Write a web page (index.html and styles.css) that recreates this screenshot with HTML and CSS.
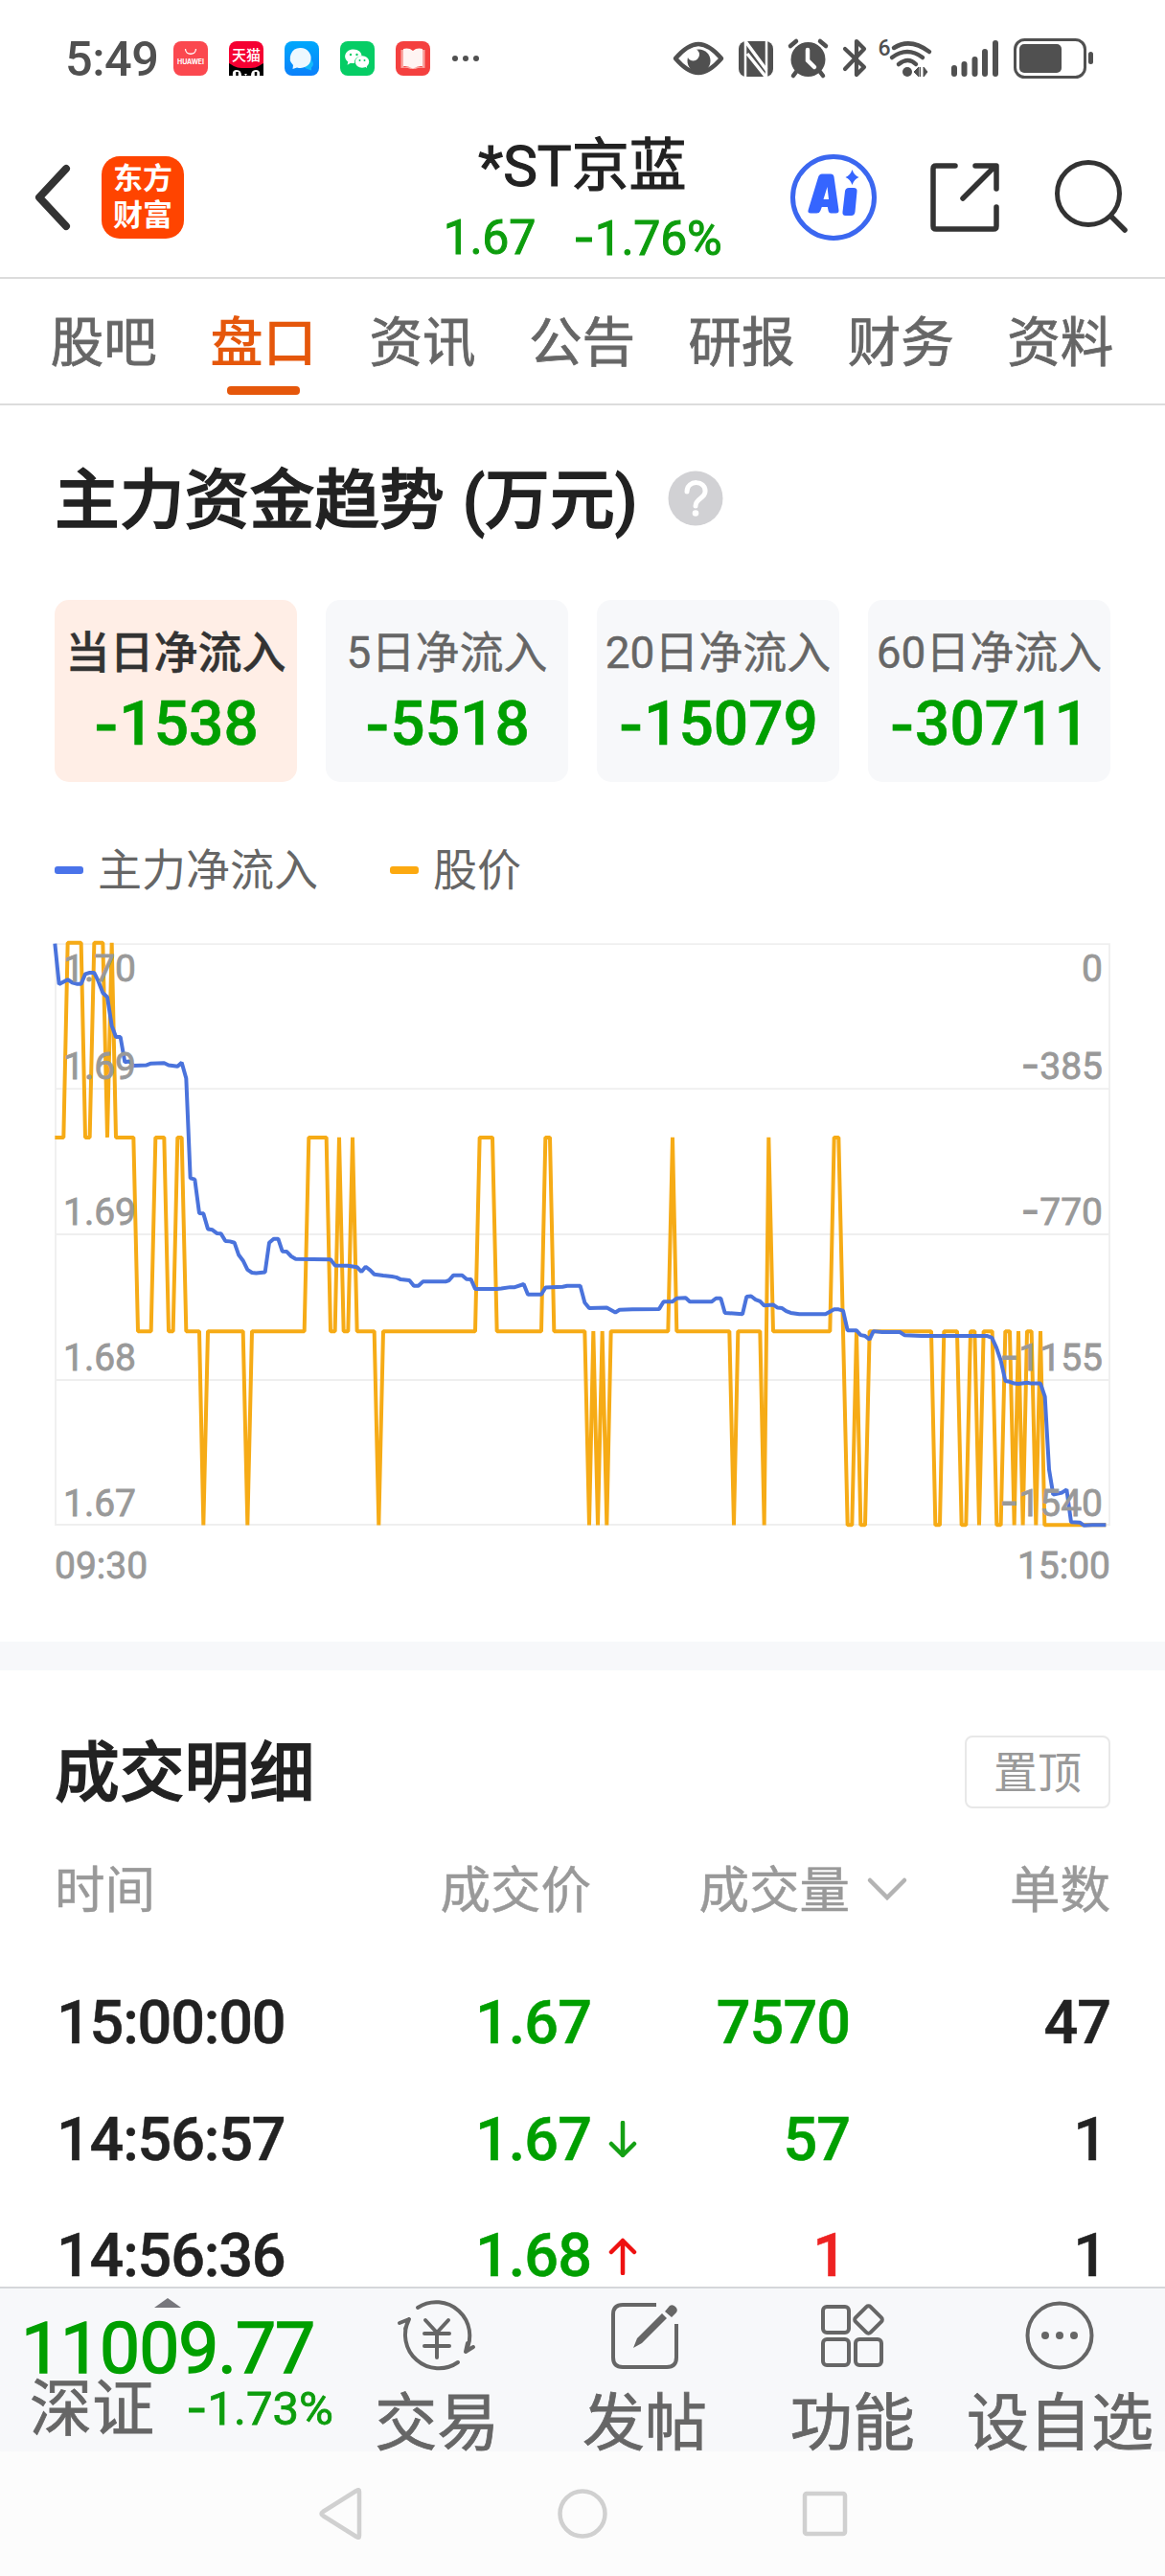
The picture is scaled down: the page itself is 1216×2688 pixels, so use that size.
FILE: index.html
```html
<!DOCTYPE html>
<html lang="zh-CN">
<head>
<meta charset="utf-8">
<title>*ST京蓝</title>
<link rel="stylesheet" href="styles.css">
</head>
<body>
<div class="status">
  <span class="clock">5:49</span>
  <div class="apps">
    <svg viewBox="0 0 36 36"><rect width="36" height="36" rx="8" fill="#fb484f"/><path d="M12.500 8c0 7 11 7 11 0" fill="none" stroke="#fff" stroke-width="1.300"/><text x="18" y="23.500" text-anchor="middle" class="t-huawei" textLength="28">HUAWEI</text></svg>
    <svg viewBox="0 0 36 36"><rect width="36" height="36" rx="8" fill="#f50032"/><path d="M0 23q2 1 5 3 4 2 8 2h10q5 0 8-2 3-2 5-3v13H0z" fill="#000"/><path d="M4 36q-1-6 4-6t5 6zM23 36q0-6 5-6t4 6zM16 34l3 0-1.500 2z" fill="#fff"/><path d="M8.500 36v-4M28 36v-4" stroke="#000" stroke-width="2.500"/><text x="18" y="19.500" text-anchor="middle" class="t-tmall">天猫</text></svg>
    <svg viewBox="0 0 36 36"><defs><linearGradient id="msg" x2="0" y2="1"><stop stop-color="#00a8fc"/><stop offset="1" stop-color="#0a80fa"/></linearGradient></defs><rect width="36" height="36" rx="8" fill="url(#msg)"/><path d="M20 25a5 5 0 1 1 8 2.500v3l-4-1.500a5 5 0 0 1-4-4z" fill="#14b9fb"/><path d="M17 7a11 10.500 0 1 1-4 20.400L8.500 29l.5-4A10.500 10.500 0 0 1 17 7z" fill="#edf8ff"/></svg>
    <svg viewBox="0 0 36 36"><rect width="36" height="36" rx="8" fill="#06cd65"/><path d="M14 8.500c5 0 8.500 3 8.500 7-4.500 0-8 3-7.500 7.500-1.500.2-3 0-4-.3l-3.500 2 .8-3.200C2 16.500 6 8.500 14 8.500z" fill="#fff"/><ellipse cx="23" cy="21.500" rx="7.200" ry="6.200" fill="#fff"/><path d="M25 26l3 2-.5-4z" fill="#fff"/><g fill="#06cd65"><circle cx="11" cy="14" r="1.200"/><circle cx="17.500" cy="14" r="1.200"/><circle cx="20.500" cy="20" r="1"/><circle cx="25.500" cy="20" r="1"/></g></svg>
    <svg viewBox="0 0 36 36"><rect width="36" height="36" rx="8" fill="#f4403f"/><path d="M5.500 9h3v18h19V9h3v19q-6-1-10 1h-5q-4-2-10-1z" fill="#f9a6a2"/><path d="M8 8q6-1.500 10 2 4-3.500 10-2v18q-5-.5-10 2.500-5-3-10-2.500z" fill="#fff4f3"/></svg>
  </div>
  <svg class="more" viewBox="0 0 30 8"><g fill="#505050"><circle cx="4" cy="4" r="3"/><circle cx="15" cy="4" r="3"/><circle cx="26" cy="4" r="3"/></g></svg>
  <svg class="sys" viewBox="700 36 446 50">
    <path d="M706 61Q719 46 730 46T754 61Q741 76 730 76T706 61z" fill="none" stroke="#505050" stroke-width="4.500" stroke-linejoin="round"/>
    <circle cx="730.500" cy="63.500" r="12" fill="#505050"/><circle cx="724.500" cy="57" r="6.500" fill="#fff"/>
    <rect x="772" y="43" width="36" height="37" rx="8" fill="#505050"/><path d="M779 42v39M801 81V42" stroke="#fff" stroke-width="2.500"/><path d="M779 43l22 30M781 56l20 25" stroke="#fff" stroke-width="3.500"/>
    <path d="M826 48l6-5M863 48l-6-5M832 75l-3 4M857 75l3 4" stroke="#505050" stroke-width="4.500" stroke-linecap="round"/><circle cx="844.500" cy="62" r="18" fill="#505050"/><path d="M844 52v11l7 7" fill="none" stroke="#fff" stroke-width="4.500" stroke-linecap="round"/>
    <path d="M883 51l20 19-8 8V43l8 8-20 21" fill="none" stroke="#505050" stroke-width="4.200" stroke-linejoin="round" stroke-linecap="round"/>
    <text x="917.500" y="58" class="t-six">6</text>
    <path d="M934 50q17-11 37 4M932 60q16-12 32 0M939 67q10-8 18 0" fill="none" stroke="#505050" stroke-width="4.500" stroke-linecap="round"/><circle cx="948" cy="75" r="5" fill="#505050"/><path d="M955 75l5-5v10zM969 75l-4-5v10zM961.500 70v10" fill="#505050" stroke="#505050"/>
    <path d="M997 71v6M1007.500 67v10M1018.500 62v15M1029 54v23M1040 45v32" stroke="#505050" stroke-width="6" stroke-linecap="round"/>
    <rect x="1060.500" y="41.500" width="73" height="39" rx="10" fill="none" stroke="#505050" stroke-width="3"/><rect x="1065" y="46" width="44" height="30" rx="5" fill="#505050"/><rect x="1137" y="54" width="5" height="13" rx="2.500" fill="#505050"/>
  </svg>
</div>

<header class="head">
  <svg class="back" viewBox="0 0 46 74"><path d="M37 7L9 37l28 30" fill="none" stroke="#333" stroke-width="8" stroke-linecap="round" stroke-linejoin="round"/></svg>
  <div class="logo"><span>东方</span><span>财富</span></div>
  <div class="stock">
    <div class="name">*ST京蓝</div>
    <div class="quote"><span>1.67</span><span><i class="m">-</i>1.76%</span></div>
  </div>
  <svg class="ai" viewBox="0 0 92 92"><circle cx="46" cy="46" r="42.500" fill="none" stroke="#3b67f0" stroke-width="5"/><path fill-rule="evenodd" d="M30 25Q31 21.500 34 21.500h9q3 0 3.500 3l5 35q.3 3-3 3h-5q-2.500 0-3-3l-.7-3.500h-6l-1.500 4q-1 2.500-4 2.500h-6q-4 0-2.500-4zM39.500 35l-4 13h5.500z" fill="#3565ff"/><path d="M58 39.500q.5-3.500 4-3.500h5q4 0 3.500 4l-2 21q-.5 4-4 4h-6q-3.500 0-3-4z" fill="#3565ff"/><path d="M65.500 17q2 6 7 8-5 2-7 8-2-6-7-8 5-2 7-8z" fill="#3565ff"/></svg>
  <svg class="share" viewBox="0 0 76 76"><path d="M28 5H8q-3 0-3 3v60q0 3 3 3h60q3 0 3-3V48M49 5h22v24M69 6L36 39" fill="none" stroke="#333" stroke-width="5.500" stroke-linecap="round" stroke-linejoin="round"/></svg>
  <svg class="search" viewBox="0 0 80 80"><circle cx="36" cy="36" r="32.500" fill="none" stroke="#333" stroke-width="5"/><path d="M60 60l14 14" stroke="#333" stroke-width="5.500" stroke-linecap="round"/></svg>
</header>

<nav class="tabs">
  <span>股吧</span><span class="on">盘口</span><span>资讯</span><span>公告</span><span>研报</span><span>财务</span><span>资料</span>
</nav>

<section class="flow">
  <h2>主力资金趋势 (万元)<svg class="help" viewBox="0 0 58 58"><circle cx="29" cy="29" r="28.500" fill="#d1d1d4"/><path d="M20 22c0-13 20-12 19 0 0 7-10 7-10 15" fill="none" stroke="#fff" stroke-width="5" stroke-linecap="round"/><circle cx="29" cy="44.500" r="3.300" fill="#fff"/></svg></h2>
  <div class="cards">
    <div class="card on"><span>当日净流入</span><b><i class="m">-</i>1538</b></div>
    <div class="card"><span>5日净流入</span><b><i class="m">-</i>5518</b></div>
    <div class="card"><span>20日净流入</span><b><i class="m">-</i>15079</b></div>
    <div class="card"><span>60日净流入</span><b><i class="m">-</i>30711</b></div>
  </div>
  <div class="legend">
    <span><i class="dash blue"></i>主力净流入</span><span><i class="dash gold"></i>股价</span>
  </div>
  <svg class="chart" viewBox="55 978 1106 680">
    <path d="M58 984.200H1158V1590H58zM58 1135.200H1158M58 1287H1158M58 1439H1158" fill="none" stroke="#efefef" stroke-width="1.800"/>
    <g transform="translate(40 960) scale(.33333 .44643)" fill="none" stroke-width="4" stroke-linejoin="bevel">
      <polyline class="series" stroke="#f6ab16" points="52,506 79,506 92,51 134,51 147,506 161,506 175,51 202,51 216,506 230,51 243,506 298,506 312,959 353,959 367,506 394,506 408,959 422,959 436,506 449,506 463,959 504,959 517,1412 531,959 641,959 655,1412 669,959 833,959 847,506 902,506 915,959 929,959 942,506 956,959 970,959 984,506 998,959 1052,959 1066,1412 1080,959 1368,959 1382,506 1422,506 1436,959 1575,959 1588,506 1602,506 1615,959 1711,959 1725,1412 1738,959 1752,1412 1766,959 1780,1412 1793,959 1972,959 1986,506 1999,959 2164,959 2178,1412 2191,959 2260,959 2273,1412 2287,506 2301,959 2479,959 2492,506 2506,506 2520,959 2534,1412 2548,1412 2562,959 2575,1412 2589,1412 2603,959 2796,959 2809,1412 2823,1412 2836,959 2877,959 2891,1412 2905,1412 2919,959 2932,959 2946,1412 2960,959 2987,959 3001,1412 3014,1412 3028,959 3042,959 3056,1412 3069,959 3083,1412 3096,959 3110,959 3124,1412 3138,959 3151,1412 3343,1412"/>
      <polyline class="series" stroke="#4a73dc" points="52,53 65,148 92,137 106,144 120,147 134,147 147,124 161,121 175,121 188,141 202,168 216,178 230,245 243,271 257,271 271,330 284,328 298,338 339,337 353,333 394,332 408,337 436,340 449,331 463,368 476,601 490,604 504,683 517,684 531,720 545,722 559,730 572,731 586,748 600,749 614,752 627,780 641,794 655,815 669,822 682,823 710,821 723,752 737,743 751,743 764,772 778,773 792,784 806,790 915,791 929,805 970,806 998,809 1012,820 1025,808 1039,816 1052,826 1080,829 1107,831 1121,833 1135,838 1162,840 1176,853 1190,853 1204,843 1275,843 1286,840 1300,828 1327,828 1341,837 1355,838 1368,860 1436,860 1450,859 1478,856 1492,856 1520,849 1533,873 1575,873 1588,857 1642,855 1656,853 1697,853 1711,892 1725,905 1780,904 1807,915 1820,909 1860,908 1944,907 1958,890 1985,890 1999,882 2027,881 2040,890 2108,890 2122,882 2137,882 2150,916 2205,919 2218,878 2232,877 2246,885 2260,889 2273,899 2301,897 2315,904 2329,905 2342,912 2356,916 2383,919 2465,919 2492,908 2506,908 2520,911 2534,957 2562,957 2575,968 2589,970 2603,978 2615,959 2642,961 2698,961 2712,968 2765,970 2972,970 2986,974 3000,997 3014,1028 3028,1075 3042,1077 3056,1081 3069,1082 3096,1079 3110,1081 3138,1081 3152,1112 3165,1282 3178,1341 3206,1336 3220,1329 3234,1405 3261,1406 3275,1413 3300,1412 3343,1412"/>
    </g>
    <g class="axis">
      <text x="66" y="1022.500">1.70</text><text x="66" y="1125">1.69</text><text x="66" y="1277">1.69</text><text x="66" y="1429">1.68</text><text x="66" y="1580.500">1.67</text><text x="57" y="1646">09:30</text>
    </g>
    <g class="axis end">
      <text x="1151" y="1022.500">0</text><text x="1151" y="1125"><tspan class="m">-</tspan>385</text><text x="1151" y="1277"><tspan class="m">-</tspan>770</text><text x="1151" y="1429"><tspan class="m">-</tspan>1155</text><text x="1151" y="1580.500"><tspan class="m">-</tspan>1540</text><text x="1159" y="1646">15:00</text>
    </g>
  </svg>
</section>

<section class="deals">
  <div class="bar"><h2>成交明细</h2><span class="pin">置顶</span></div>
  <div class="row th"><span>时间</span><span>成交价</span><i></i><span>成交量</span><svg class="chev" viewBox="0 0 44 26"><path d="M4 4l18 18L40 4" fill="none" stroke="#b3b3b3" stroke-width="4.500" stroke-linecap="round"/></svg><span>单数</span></div>
  <div class="row"><span>15:00:00</span><span class="dn">1.67</span><i></i><span class="dn">7570</span><i></i><span>47</span></div>
  <div class="row"><span>14:56:57</span><span class="dn">1.67</span><svg class="arrow" viewBox="0 0 30 40"><path d="M15 2v34M3 24l12 12 12-12" fill="none" stroke="#14a014" stroke-width="4.500" stroke-linecap="round" stroke-linejoin="round"/></svg><span class="dn">57</span><i></i><span class="one">1</span></div>
  <div class="row"><span>14:56:36</span><span class="dn">1.68</span><svg class="arrow" viewBox="0 0 30 40"><path d="M15 38V4M3 16L15 4l12 12" fill="none" stroke="#ee1111" stroke-width="4.500" stroke-linecap="round" stroke-linejoin="round"/></svg><span class="up one">1</span><i></i><span class="one">1</span></div>
</section>

<footer class="dock">
  <div class="index">
    <svg class="tri" viewBox="0 0 28 10"><path d="M0 10L14 0l14 10z" fill="#77777c"/></svg>
    <div class="points">11009.77</div>
    <div class="market"><span>深证</span><em><i class="m">-</i>1.73%</em></div>
  </div>
  <div class="tool"><svg viewBox="0 0 84 76"><g fill="none" stroke="#666" stroke-width="4" stroke-linecap="round" stroke-linejoin="round"><path d="M22 9a35 35 0 0 1 50 46l8-5M64 66A35 35 0 0 1 13 21l-10 4M72 55l2-9M13 21l-4 10M30 22l12 13 12-13M42 35v26M29 36h26M29 49h26"/></g></svg><span>交易</span></div>
  <div class="tool"><svg viewBox="0 0 76 76"><path d="M50 6H15Q5 6 5 16v45q0 10 10 10h46q10 0 10-10V26" fill="none" stroke="#666" stroke-width="4"/><path d="M26 51l4-10 26-26 5 5-26 26zM59 13l5-6q3-2 6 1t1 6l-5 5z" fill="#666"/></svg><span>发帖</span></div>
  <div class="tool"><svg viewBox="0 0 76 76"><g fill="none" stroke="#666" stroke-width="4" stroke-linejoin="round"><rect x="7" y="8" width="27" height="27" rx="4"/><rect x="7" y="42" width="27" height="27" rx="4"/><rect x="41" y="42" width="27" height="27" rx="4"/><rect x="43.500" y="10.500" width="22" height="22" rx="3" transform="rotate(45 54.500 21.500)"/></g></svg><span>功能</span></div>
  <div class="tool"><svg viewBox="0 0 76 76"><circle cx="38" cy="38" r="33.500" fill="none" stroke="#666" stroke-width="4"/><g fill="#666"><circle cx="23" cy="38" r="4"/><circle cx="38" cy="38" r="4"/><circle cx="53" cy="38" r="4"/></g></svg><span>设自选</span></div>
</footer>
<div class="keys">
  <svg viewBox="0 0 60 60"><path d="M50 7v46q0 3-3 1L12 32q-3-2 0-4L47 6q3-2 3 1z" fill="none" stroke="#d0d0d0" stroke-width="4.500"/></svg>
  <svg viewBox="0 0 60 60"><circle cx="30" cy="30" r="23.500" fill="none" stroke="#d0d0d0" stroke-width="4.500"/></svg>
  <svg viewBox="0 0 60 60"><rect x="9" y="9" width="42" height="42" rx="2" fill="none" stroke="#d0d0d0" stroke-width="4.500"/></svg>
</div>
</body>
</html>
```

FILE: styles.css
```css
* { box-sizing: border-box; margin: 0; padding: 0; }
body {
  width: 1216px; height: 2688px; overflow: hidden;
  display: flex; flex-direction: column;
  background: #fff; color: #222;
  font-family: Roboto, "Noto Sans CJK SC", sans-serif;
}
svg { display: block; flex: none; }
i, em { font-style: normal; }
.m { font-family: Inter, sans-serif; font-weight: inherit; }

.status { height: 122px; display: flex; align-items: center; padding-left: 68px; flex: none; }
.clock { width: 113px; font-size: 50.500px; font-weight: 500; line-height: 60px; letter-spacing: -.5px; padding-top: 2px; color: #505050; }
.apps { display: flex; gap: 22px; }
.apps svg { width: 36px; height: 36px; }
.t-huawei { font: 700 7px Inter, sans-serif; fill: #fff; }
.t-tmall { font: 500 15px "Noto Sans CJK SC", sans-serif; fill: #fff; }
.t-six { font: 500 23px Roboto, sans-serif; fill: #505050; }
.more { width: 30px; height: 8px; margin-left: 22px; }
.sys { width: 446px; height: 50px; margin-left: 198px; }

.head { height: 169px; flex: none; display: flex; align-items: center; padding-left: 32px; border-bottom: 2px solid #dcdcdc; }
.back { width: 46px; height: 74px; }
.logo {
  width: 86px; height: 86px; margin-left: 28px; border-radius: 19px; background: #ff4400; color: #fff;
  display: flex; flex-direction: column; justify-content: center; align-items: center;
  font-size: 31px; font-weight: 700; line-height: 38px;
}
.stock { margin-left: 256px; width: 320px; text-align: center; padding-top: 6px; }
.name { font-size: 60px; line-height: 76px; font-weight: 400; -webkit-text-stroke: 1.200px #222; }
.quote { display: flex; justify-content: center; gap: 39px; margin-top: 4px; font-size: 50px; line-height: 64px; color: #0d9d0d; letter-spacing: -.3px; -webkit-text-stroke: 1px #0d9d0d; }
.ai { width: 92px; height: 92px; margin-left: 56px; }
.share { width: 76px; height: 76px; margin-left: 53px; }
.search { width: 80px; height: 80px; margin-left: 55px; }

.tabs { height: 132px; flex: none; display: flex; padding: 0 26px 0 25px; border-bottom: 2px solid #dcdcdc; font-size: 55.500px; line-height: 136px; color: #666; -webkit-text-stroke: .8px; }
.tabs span { flex: 1; text-align: center; position: relative; }
.tabs .on { color: #e5570b; font-weight: 500; -webkit-text-stroke: 0; }
.tabs .on::after { content: ""; position: absolute; left: 46px; top: 112px; width: 76px; height: 9px; border-radius: 4px; background: #e5570b; }

.flow { height: 1290px; flex: none; padding: 58px 57px 0; }
h2 { font-size: 67.800px; font-weight: 500; line-height: 84px; display: flex; align-items: center; -webkit-text-stroke: 1.300px; white-space: pre; }
.help { width: 58px; height: 58px; margin: -6px 0 0 32px; }
.flow h2 { word-spacing: 2px; }
.cards { margin-top: 61px; display: grid; grid-template-columns: repeat(4, 253px); gap: 30px; }
.card { height: 190px; border-radius: 15px; background: #f7f8fa; text-align: center; padding-top: 25px; color: #666; white-space: nowrap; }
.card span { display: block; font-size: 46px; line-height: 60px; -webkit-text-stroke: .4px; }
.card b { display: block; font-size: 64px; font-weight: 500; line-height: 76px; margin-top: 7px; color: #009f00; -webkit-text-stroke: .6px; }
.card.on { background: #ffeee6; }
.card.on span { color: #333; font-weight: 500; }
.card .m { font-size: 58px; font-weight: 600; }
.legend { height: 60px; margin-top: 62px; display: flex; gap: 75px; font-size: 46px; line-height: 60px; color: #666; }
.legend span { display: flex; align-items: center; gap: 15px; }
.dash { width: 30px; height: 8px; border-radius: 3px; }
.blue { background: #4a73ea; }
.gold { background: #fca910; }
.chart { width: 1106px; height: 680px; margin: 41px 0 0 -2px; }
.series { vector-effect: non-scaling-stroke; }
.axis { font-size: 39px; fill: #999; stroke: #999; stroke-width: .8px; }
.axis .m { font-size: 43px; }
.end { text-anchor: end; }

.deals { height: 673px; flex: none; overflow: hidden; border-top: 30px solid #f7f8fa; padding: 66px 57px 0; }
.bar { height: 80px; display: flex; justify-content: space-between; align-items: center; }
.bar h2 { padding-top: 4px; }
.pin { width: 152px; height: 76px; border: 2px solid #e8e8e8; border-radius: 8px; text-align: center; font-size: 46px; line-height: 74px; color: #999; }
.row { display: grid; grid-template-columns: 260px 300px 60px 210px 60px 212px; align-items: center; height: 121.500px; font-size: 63px; font-weight: 500; line-height: 76px; text-align: right; letter-spacing: -1px; padding-top: 3px; -webkit-text-stroke: .5px; }
.row span:first-child { text-align: left; padding-left: 2px; letter-spacing: -1.200px; white-space: nowrap; }
.row .one { padding-right: 4px; }
.row.th { height: 160px; padding-top: 7px; font-size: 52.500px; font-weight: 400; color: #999; letter-spacing: 0; }
.row.th span:first-child { letter-spacing: 0; padding-left: 0; }
.row svg { justify-self: center; }
.th svg { justify-self: end; margin: -4px -1px 0 0; }
.arrow { width: 30px; height: 40px; margin-left: 6px; }
.chev { width: 44px; height: 26px; }
.dn { color: #009f00; }
.up { color: #ee2222; }

.dock { height: 172px; flex: none; background: #f7f8fa; border-top: 2px solid #d5d7da; display: flex; overflow: hidden; color: #666; }
.index { width: 348px; padding: 10px 0 0 22px; flex: none; }
.tri { width: 28px; height: 10px; margin-left: 139px; }
.points { font-size: 75px; line-height: 84px; letter-spacing: -1.100px; color: #009f00; -webkit-text-stroke: 1.500px #009f00; margin-top: 0; }
.market { display: flex; align-items: center; font-size: 65px; line-height: 70px; margin: -14px 0 0 9px; white-space: nowrap; -webkit-text-stroke: .8px; }
.market span { width: 163px; flex: none; }
.market em { font-size: 49px; color: #0d9d0d; }
.tool { width: 216.700px; flex: none; display: flex; flex-direction: column; align-items: center; font-size: 65px; line-height: 90px; padding-top: 11px; white-space: nowrap; -webkit-text-stroke: .8px; }
.tool svg { height: 76px; width: auto; -webkit-text-stroke: 0; }
.tool span { margin-top: 9px; }

.keys { height: 130px; flex: none; background: #fcfcfc; display: flex; justify-content: center; align-items: center; gap: 193px; }
.keys svg { width: 60px; height: 60px; }
```
